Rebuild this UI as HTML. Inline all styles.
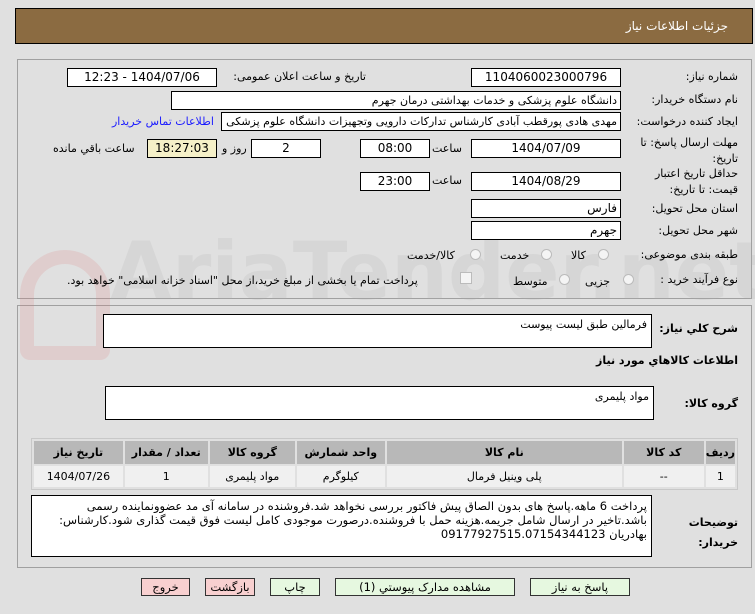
<!DOCTYPE html>
<html><head><meta charset="utf-8"><style>
*{margin:0;padding:0;box-sizing:border-box}
body{width:755px;height:614px;background:#e0e0e0;font-family:"DejaVu Sans","Liberation Sans",sans-serif;font-size:11px;color:#000;position:relative;overflow:hidden;direction:rtl}
.a{position:absolute;white-space:nowrap}
.in{position:absolute;background:#fff;border:1px solid #000;height:19px;line-height:17px;text-align:center;font-size:12px;white-space:nowrap;overflow:hidden}
.lbl{position:absolute;white-space:nowrap;text-align:right}
.ta{position:absolute;background:#fff;border:1px solid #000;padding:3px 4px;text-align:right;font-size:11px;line-height:14px}
.btn{position:absolute;height:18px;border:1px solid #333;text-align:center;line-height:16px;font-size:11.5px;top:578px}
.radio{position:absolute;width:11px;height:11px;border:1px solid #bbb;border-radius:50%;background:#f4f4f4}
table{position:absolute;left:31px;top:438px;width:707px;border-collapse:separate;border-spacing:2px;border:1px solid #c8c8c8;background:#e0e0e0}
th{background:#b8b8b8;height:23px;font-size:11px;font-weight:bold}
td{background:#f0f0f0;height:21px;text-align:center;font-size:11px}
</style></head><body>
<div class="a" style="left:15px;top:8px;width:738px;height:36px;background:#8b6b41;border:1px solid #000"></div>
<div class="a" style="right:27px;top:19px;color:#fff;font-size:12px">جزئیات اطلاعات نیاز</div>

<div class="a" style="left:17px;top:59px;width:735px;height:240px;border:1px solid #a0a0a0"></div>
<div class="a" style="left:17px;top:305px;width:735px;height:263px;border:1px solid #a0a0a0"></div>

<div class="a" style="left:110px;top:225px;font-size:80px;font-weight:bold;color:rgba(170,170,170,0.18);direction:ltr">AriaTender.net</div>
<div class="a" style="left:20px;top:250px;width:90px;height:110px;border:14px solid rgba(220,120,120,0.18);border-radius:45px 45px 10px 10px"></div>

<div class="lbl" style="right:17px;top:70px">شماره نیاز:</div>
<div class="in" style="left:471px;top:68px;width:150px">1104060023000796</div>
<div class="lbl" style="right:389px;top:70px">تاریخ و ساعت اعلان عمومی:</div>
<div class="in" style="left:67px;top:68px;width:150px">1404/07/06 - 12:23</div>

<div class="lbl" style="right:17px;top:93px">نام دستگاه خریدار:</div>
<div class="in" style="left:171px;top:91px;width:450px;text-align:right;padding-right:3px;font-size:11px">دانشگاه علوم پزشکی و خدمات بهداشتی  درمان جهرم</div>

<div class="lbl" style="right:17px;top:115px">ایجاد کننده درخواست:</div>
<div class="in" style="left:221px;top:112px;width:400px;text-align:right;padding-right:3px;font-size:11px">مهدی هادی پورقطب آبادی کارشناس تدارکات دارویی وتجهیزات دانشگاه علوم پزشکی</div>
<div class="lbl" style="left:112px;top:115px;color:#1a1aff">اطلاعات تماس خریدار</div>

<div class="lbl" style="right:17px;top:135px;line-height:16px">مهلت ارسال پاسخ: تا<br>تاریخ:</div>
<div class="in" style="left:471px;top:139px;width:150px">1404/07/09</div>
<div class="lbl" style="left:432px;top:142px">ساعت</div>
<div class="in" style="left:360px;top:139px;width:70px">08:00</div>
<div class="in" style="left:251px;top:139px;width:70px">2</div>
<div class="lbl" style="left:222px;top:142px">روز و</div>
<div class="in" style="left:147px;top:139px;width:70px;background:#f5f0c8">18:27:03</div>
<div class="lbl" style="left:53px;top:142px">ساعت باقي مانده</div>

<div class="lbl" style="right:17px;top:166px;line-height:16px">حداقل تاریخ اعتبار<br>قیمت: تا تاریخ:</div>
<div class="in" style="left:471px;top:172px;width:150px">1404/08/29</div>
<div class="lbl" style="left:432px;top:174px">ساعت</div>
<div class="in" style="left:360px;top:172px;width:70px">23:00</div>

<div class="lbl" style="right:17px;top:202px">استان محل تحویل:</div>
<div class="in" style="left:471px;top:199px;width:150px;text-align:right;padding-right:3px">فارس</div>
<div class="lbl" style="right:17px;top:224px">شهر محل تحویل:</div>
<div class="in" style="left:471px;top:221px;width:150px;text-align:right;padding-right:3px">جهرم</div>

<div class="lbl" style="right:17px;top:248px">طبقه بندی موضوعی:</div>
<div class="radio" style="left:598px;top:249px"></div><div class="lbl" style="left:571px;top:249px">کالا</div>
<div class="radio" style="left:541px;top:249px"></div><div class="lbl" style="left:500px;top:249px">خدمت</div>
<div class="radio" style="left:470px;top:249px"></div><div class="lbl" style="left:407px;top:249px">کالا/خدمت</div>

<div class="lbl" style="right:17px;top:273px">نوع فرآیند خرید :</div>
<div class="radio" style="left:623px;top:274px"></div><div class="lbl" style="left:585px;top:275px">جزیی</div>
<div class="radio" style="left:559px;top:274px"></div><div class="lbl" style="left:513px;top:275px">متوسط</div>
<div class="a" style="left:460px;top:272px;width:12px;height:12px;border:1px solid #bbb;background:#f4f4f4"></div>
<div class="lbl" style="left:67px;top:274px">پرداخت تمام یا بخشی از مبلغ خرید،از محل "اسناد خزانه اسلامی" خواهد بود.</div>

<div class="lbl" style="right:17px;top:322px;font-weight:bold">شرح كلي نياز:</div>
<div class="ta" style="left:103px;top:314px;width:549px;height:34px">فرمالین طبق لیست پیوست</div>
<div class="lbl" style="right:17px;top:354px;font-weight:bold">اطلاعات كالاهاي مورد نياز</div>
<div class="lbl" style="right:17px;top:397px;font-weight:bold">گروه کالا:</div>
<div class="ta" style="left:105px;top:386px;width:549px;height:34px">مواد پلیمری</div>

<table>
<tr><th style="width:29px">ردیف</th><th style="width:80px">کد کالا</th><th style="width:235px">نام کالا</th><th style="width:88px">واحد شمارش</th><th style="width:85px">گروه کالا</th><th style="width:83px">تعداد / مقدار</th><th>تاریخ نیاز</th></tr>
<tr><td>1</td><td>--</td><td>پلی وینیل فرمال</td><td>کیلوگرم</td><td>مواد پلیمری</td><td>1</td><td>1404/07/26</td></tr>
</table>

<div class="lbl" style="right:17px;top:513px;font-weight:bold;line-height:20px">توضیحات<br>خریدار:</div>
<div class="ta" style="left:31px;top:495px;width:621px;height:62px;font-size:11.5px">پرداخت 6 ماهه.پاسخ های بدون الصاق پیش فاکتور بررسی نخواهد شد.فروشنده در سامانه آی مد عضوونماینده رسمی باشد.تاخیر در ارسال شامل جریمه.هزینه حمل با فروشنده.درصورت موجودی کامل لیست فوق قیمت گذاری شود.کارشناس: بهادریان 09177927515.07154344123</div>

<div class="btn" style="left:141px;width:49px;background:#f8d0d0">خروج</div>
<div class="btn" style="left:205px;width:50px;background:#f8d0d0">بازگشت</div>
<div class="btn" style="left:270px;width:50px;background:#e6f8e0">چاپ</div>
<div class="btn" style="left:335px;width:180px;background:#e6f8e0">مشاهده مدارک پیوستي (1)</div>
<div class="btn" style="left:530px;width:100px;background:#e6f8e0">پاسخ به نیاز</div>
</body></html>
